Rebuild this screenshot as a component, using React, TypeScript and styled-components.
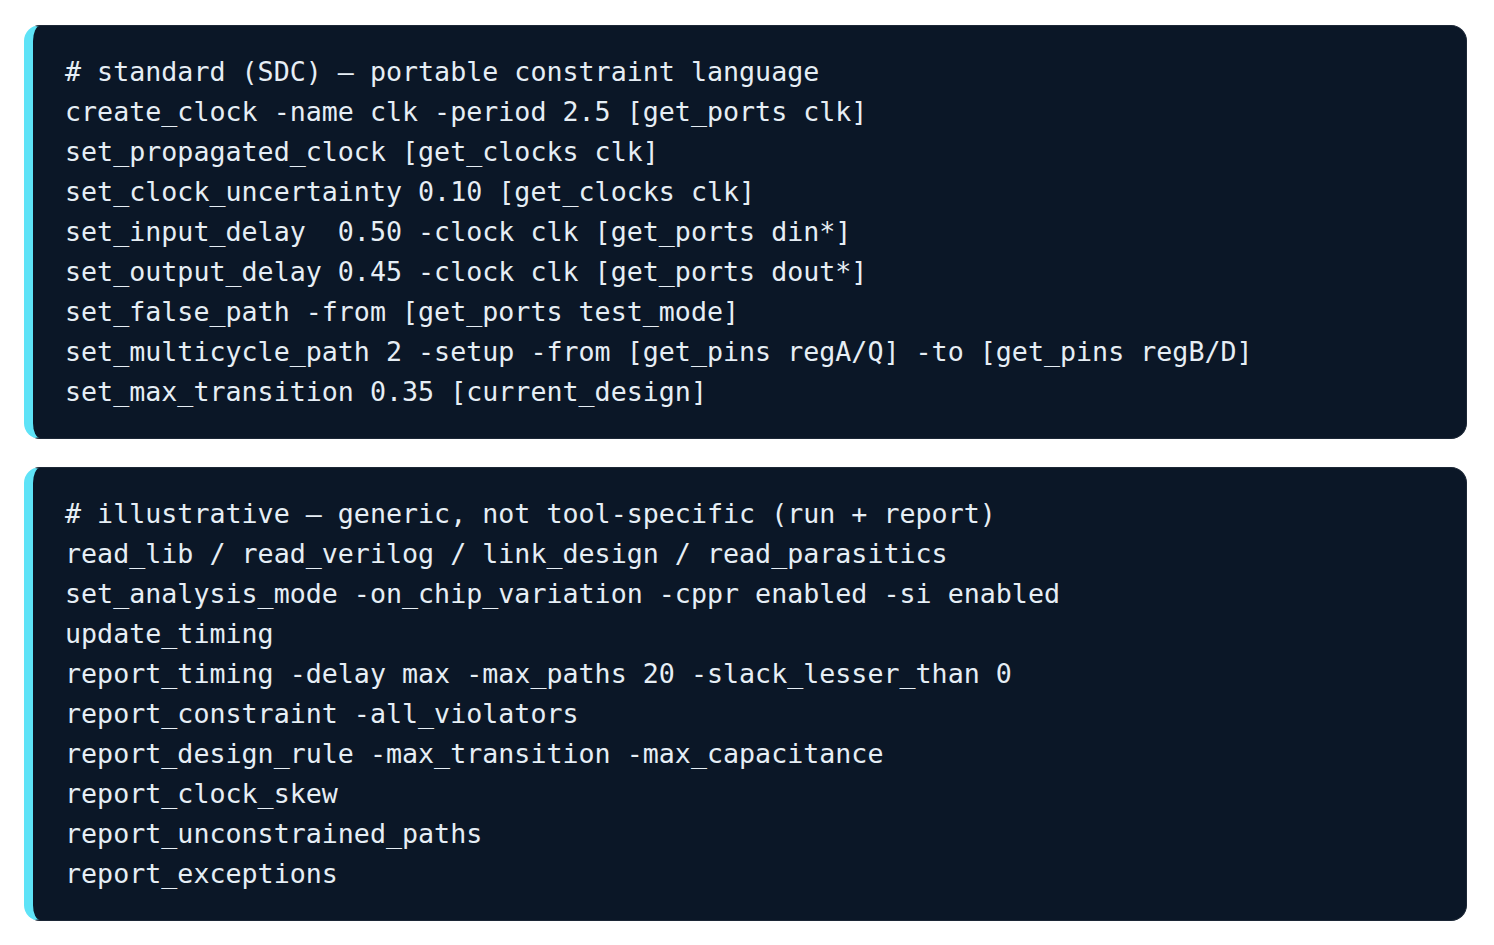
import React from "react";
import styled, { createGlobalStyle } from "styled-components";

const GlobalStyle = createGlobalStyle`
  html, body { margin: 0; padding: 0; background: #ffffff; }
  body { font-family: "DejaVu Sans", sans-serif; }
`;

const Page = styled.div`
  display: flex;
  flex-direction: column;
  gap: 28px;
  padding: 25px 27px 25px 24px;
`;

const CodeBlock = styled.pre`
  margin: 0;
  background: #0b1727;
  color: #e6eef5;
  border: 1px solid #1c2736;
  border-left: 9px solid #5ee3f7;
  border-radius: 16px;
  padding: 26px 24px 26px 32px;
  font-family: "DejaVu Sans Mono", monospace;
  font-size: 26.67px;
  line-height: 40px;
  white-space: pre;
  overflow: hidden;
`;

const Line = styled.div`
  height: 40px;
`;

const block1 = [
  "# standard (SDC) — portable constraint language",
  "create_clock -name clk -period 2.5 [get_ports clk]",
  "set_propagated_clock [get_clocks clk]",
  "set_clock_uncertainty 0.10 [get_clocks clk]",
  "set_input_delay  0.50 -clock clk [get_ports din*]",
  "set_output_delay 0.45 -clock clk [get_ports dout*]",
  "set_false_path -from [get_ports test_mode]",
  "set_multicycle_path 2 -setup -from [get_pins regA/Q] -to [get_pins regB/D]",
  "set_max_transition 0.35 [current_design]",
];

const block2 = [
  "# illustrative — generic, not tool-specific (run + report)",
  "read_lib / read_verilog / link_design / read_parasitics",
  "set_analysis_mode -on_chip_variation -cppr enabled -si enabled",
  "update_timing",
  "report_timing -delay max -max_paths 20 -slack_lesser_than 0",
  "report_constraint -all_violators",
  "report_design_rule -max_transition -max_capacitance",
  "report_clock_skew",
  "report_unconstrained_paths",
  "report_exceptions",
];

export default function App() {
  return (
    <>
      <GlobalStyle />
      <Page>
        <CodeBlock>
          {block1.map((l, i) => (
            <Line key={i}>{l}</Line>
          ))}
        </CodeBlock>
        <CodeBlock>
          {block2.map((l, i) => (
            <Line key={i}>{l}</Line>
          ))}
        </CodeBlock>
      </Page>
    </>
  );
}
